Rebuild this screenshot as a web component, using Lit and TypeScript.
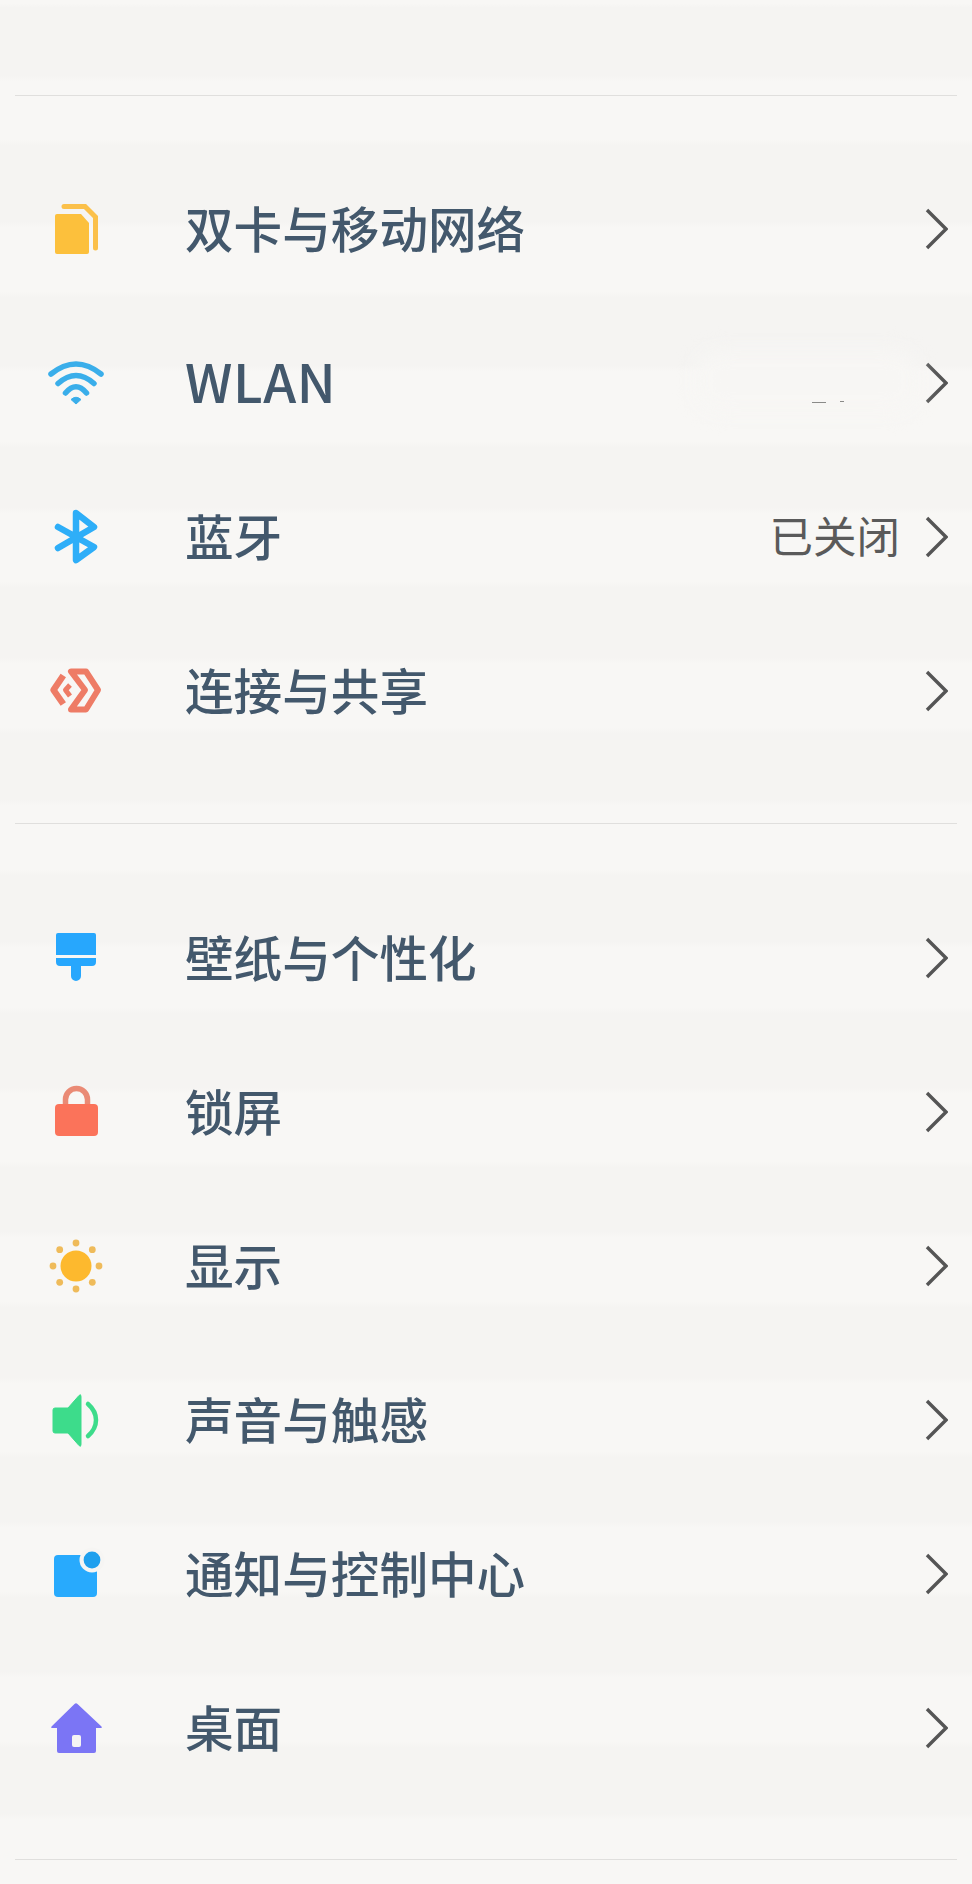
import { LitElement, html, css, svg } from "lit";
import { customElement } from "lit/decorators.js";

type Item = { label: string; icon: unknown; value?: string; latin?: boolean; smudge?: boolean };

const icons = {
  sim: svg`<path d="M13 17H37L45 26V55Q45 57 43 57H13Q11 57 11 55V19Q11 17 13 17Z" fill="#fcc03c"/><path d="M20 9.5H41L51.5 20V51" fill="none" stroke="#fbc04a" stroke-width="5" stroke-linecap="round"/>`,
  wifi: svg`<g fill="none" stroke="#3aaeea" stroke-width="5.5" stroke-linecap="round"><path d="M7 23Q32 3 57 23"/><path d="M14 32.5Q32 16.5 50 32.5"/><path d="M21.5 42Q32 29.5 42.5 42"/></g><path d="M32 53L27 48.5Q32 44 37 48.5Z" fill="#3aaeea" stroke="#3aaeea" stroke-width="1" stroke-linejoin="round"/>`,
  bt: svg`<path d="M14 22L50 42L32 55V8L50 22L14 43" fill="none" stroke="#2eaef8" stroke-width="6.5" stroke-linecap="round" stroke-linejoin="round"/>`,
  link: svg`<g fill="none" stroke="#ee7c66" stroke-linejoin="round"><path d="M27 12.5H42L54 31L42 50.5H27L41 31Z" stroke-width="6"/><path d="M19.3 16.5L9.5 31L19.3 45" stroke-width="6.5"/><path d="M26 26L21.5 31L26 37" stroke-width="5"/></g>`,
  brush: svg`<path d="M14 7H50Q52 7 52 9V29H12V9Q12 7 14 7Z" fill="#27a7fd"/><path d="M12 32H52V36Q52 40 48 40H37V50A5 5 0 0 1 27 50V40H16Q12 40 12 36Z" fill="#27a7fd"/>`,
  lock: svg`<path d="M21.5 26V19.5A11 11 0 0 1 43.5 19.5V26" fill="none" stroke="#ea8a75" stroke-width="5.5"/><rect x="11" y="24" width="43" height="32" rx="4" fill="#fb735a"/>`,
  sun: svg`<circle cx="32" cy="32" r="15.5" fill="#fdb92e"/><g fill="#efbb5a"><circle cx="32" cy="9" r="3.4"/><circle cx="32" cy="55" r="3.4"/><circle cx="9" cy="32" r="3.4"/><circle cx="55" cy="32" r="3.4"/><circle cx="15.7" cy="15.7" r="3.4"/><circle cx="48.3" cy="15.7" r="3.4"/><circle cx="15.7" cy="48.3" r="3.4"/><circle cx="48.3" cy="48.3" r="3.4"/></g>`,
  sound: svg`<path d="M11 20H24L35 7.5Q37 5.5 37 8.5V56.5Q37 59.5 35 57.5L24 45H11Q9 45 9 43V22Q9 20 11 20Z" fill="#3ddc8b" stroke="#3ddc8b" stroke-width="1" stroke-linejoin="round"/><path d="M44 16Q52 23 52 32Q52 41 44 48" fill="none" stroke="#3ddc8b" stroke-width="4.5" stroke-linecap="round"/>`,
  notify: svg`<rect x="10" y="13" width="43" height="42" rx="4" fill="#28aafd"/><circle cx="48" cy="18" r="12.5" fill="#f6f5f3"/><circle cx="48" cy="18" r="8.4" fill="#1fa0ee"/>`,
  home: svg`<path d="M30.5 8Q32 6.5 33.5 8L57.5 30.5Q58.5 32 57 32H52V55Q52 57 50 57H15Q13 57 13 55V32H8Q6.5 32 7.5 30.5Z" fill="#7b75f5"/><rect x="28" y="39" width="9" height="12" rx="2" fill="#f5f4f4"/>`,
};

const groupOne: Item[] = [
  { label: "双卡与移动网络", icon: icons.sim },
  { label: "WLAN", icon: icons.wifi, latin: true, smudge: true },
  { label: "蓝牙", icon: icons.bt, value: "已关闭" },
  { label: "连接与共享", icon: icons.link },
];
const groupTwo: Item[] = [
  { label: "壁纸与个性化", icon: icons.brush },
  { label: "锁屏", icon: icons.lock },
  { label: "显示", icon: icons.sun },
  { label: "声音与触感", icon: icons.sound },
  { label: "通知与控制中心", icon: icons.notify },
  { label: "桌面", icon: icons.home },
];

@customElement("app-root")
export class AppRoot extends LitElement {
  static styles = css`
    :host {
      display: block;
      width: 972px;
      height: 1884px;
      overflow: hidden;
      font-family: "Noto Sans CJK SC", "Noto Sans", sans-serif;
      --d: #f5f4f2;
      --l: #f8f7f5;
      background: linear-gradient(
        to bottom,
        var(--l) 0 3px,
        var(--d) 8px 76px,
        var(--l) 82px 140px,
        var(--d) 146px 222px,
        var(--l) 228px 292px,
        var(--d) 298px 365px,
        var(--l) 371px 442px,
        var(--d) 448px 507px,
        var(--l) 513px 582px,
        var(--d) 588px 657px,
        var(--l) 663px 727px,
        var(--d) 733px 800px,
        var(--l) 806px 870px,
        var(--d) 876px 942px,
        var(--l) 948px 1007px,
        var(--d) 1013px 1087px,
        var(--l) 1093px 1162px,
        var(--d) 1168px 1232px,
        var(--l) 1238px 1302px,
        var(--d) 1308px 1377px,
        var(--l) 1383px 1452px,
        var(--d) 1458px 1522px,
        var(--l) 1528px 1592px,
        var(--d) 1598px 1672px,
        var(--l) 1678px 1742px,
        var(--d) 1748px 1813px,
        var(--l) 1819px 1884px
      );
    }
    .top { height: 95px; }
    .rule { height: 1px; margin: 0 15px; background: #e0dfdd; }
    .group { padding: 56px 0 55px; }
    .group.second { padding: 57px 0 54px; }
    .row {
      position: relative;
      height: 154px;
      display: flex;
      align-items: center;
      padding: 0 24px 0 44px;
      box-sizing: border-box;
    }
    .icon { width: 64px; height: 64px; flex: none; display: block; }
    .label {
      margin: 0 0 5px 77px;
      flex: 1;
      font-size: 48.6px;
      font-weight: 500;
      color: #43586c;
      line-height: 64px;
    }
    .label.latin {
      margin-bottom: 7px;
      font-size: 53px;
      letter-spacing: 0.6px;
    }
    .value {
      font-size: 43.5px;
      font-weight: 400;
      color: #5a5a5a;
      line-height: 56px;
      margin: 0 24px 5px 0;
    }
    .chev { width: 24px; height: 42px; flex: none; display: block; }
    .smudge {
      position: absolute;
      left: 696px;
      top: 44px;
      width: 222px;
      height: 62px;
      background: #f7f6f4;
      filter: blur(10px);
      border-radius: 24px;
    }
    .mark {
      position: absolute;
      height: 1px;
      background: #8a8a88;
    }
    .mark.a { left: 812px; top: 96px; width: 14px; }
    .mark.b { left: 840px; top: 95px; width: 4px; }
  `;

  private row(item: Item) {
    return html`<div class="row">
      <svg class="icon" viewBox="0 0 64 64">${item.icon}</svg>
      <div class="label ${item.latin ? "latin" : ""}">${item.label}</div>
      ${item.value ? html`<div class="value">${item.value}</div>` : null}
      <svg class="chev" viewBox="0 0 24 42"><path d="M3 2L22 21L3 40" fill="none" stroke="#555555" stroke-width="3.4"/></svg>
      ${item.smudge
        ? html`<div class="smudge"></div><div class="mark a"></div><div class="mark b"></div>`
        : null}
    </div>`;
  }

  render() {
    return html`
      <div class="top"></div>
      <div class="rule"></div>
      <div class="group">${groupOne.map((i) => this.row(i))}</div>
      <div class="rule"></div>
      <div class="group second">${groupTwo.map((i) => this.row(i))}</div>
      <div class="rule"></div>
    `;
  }
}
